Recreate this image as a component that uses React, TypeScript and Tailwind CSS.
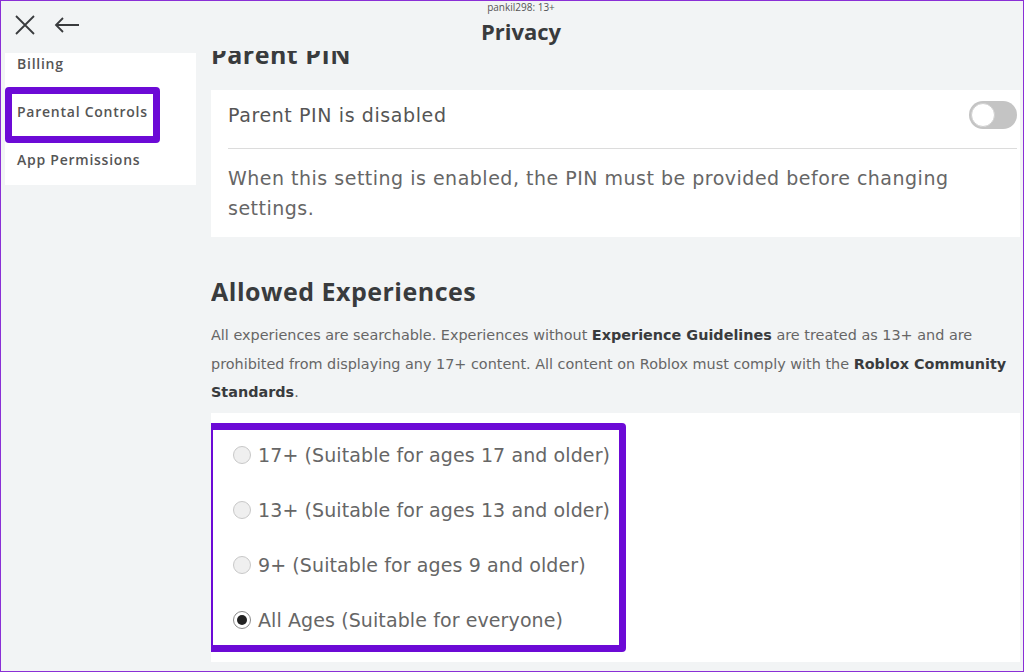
import React, { useState } from "react";

const radioOptions = [
  "17+ (Suitable for ages 17 and older)",
  "13+ (Suitable for ages 13 and older)",
  "9+ (Suitable for ages 9 and older)",
  "All Ages (Suitable for everyone)",
];

const sideItems = ["Billing", "Parental Controls", "App Permissions"];

const wide = { fontFamily: '"DejaVu Sans", "Open Sans", sans-serif' };

const App = () => {
  const [selected, setSelected] = useState(3);
  const [pinOn, setPinOn] = useState(false);

  return (
    <div
      className="w-[1024px] h-[672px] border border-[#8a2fd6] bg-[#f2f4f5] overflow-hidden flex flex-col text-[#393b3d]"
      style={{ fontFamily: '"Open Sans", "Noto Sans", sans-serif' }}
    >
      {/* Header */}
      <div className="relative h-[50px] shrink-0 flex items-start">
        <div className="flex items-center gap-[18px] pl-[13px] pt-[13px]">
          <svg width="22" height="22" viewBox="0 0 22 22" fill="none" stroke="#393b3d" strokeWidth="1.8">
            <path d="M2 2 L20 20 M20 2 L2 20" />
          </svg>
          <svg width="26" height="16" viewBox="0 0 26 16" fill="none" stroke="#393b3d" strokeWidth="1.8">
            <path d="M25 8 H2 M9 1 L2 8 L9 15" />
          </svg>
        </div>
        <div className="absolute left-[18px] right-0 top-0 flex flex-col items-center">
          <span className="text-[10px] leading-[14px] text-[#555] mt-[-1px]">pankil298: 13+</span>
          <span className="text-[22px] leading-[30px] font-bold mt-[2px]">Privacy</span>
        </div>
      </div>

      <div className="flex flex-1 min-h-0 pl-[4px]">
        {/* Sidebar */}
        <div className="relative w-[191px] h-[132px] shrink-0 mt-[2px] bg-white">
          <div className="overflow-hidden h-full">
            <div className="mt-[-14px]">
              {sideItems.map((item) => (
                <div
                  key={item}
                  className="h-[48px] flex items-center pl-[12px] text-[14px] tracking-[0.75px] font-semibold text-[#555]"
                >
                  {item}
                </div>
              ))}
            </div>
          </div>
          <div className="absolute left-[0px] top-[34px] w-[155px] h-[56px] border-[7px] border-[#6c0ad6] rounded-[4px]" />
        </div>

        {/* Main */}
        <div className="flex-1 min-w-0 ml-[15px] mr-[3px] overflow-hidden">
          <div className="mt-[-13px]">
            <h2 className="text-[25px] leading-[32px] tracking-[0.5px] font-bold">Parent PIN</h2>
            <div className="bg-white mt-[20px] pl-[17px] pr-[3px]" style={wide}>
              <div className="flex items-center justify-between pt-[11px] pb-[19px] border-b border-[#dcdcdc]">
                <span className="text-[19px] leading-[28px] tracking-[0.6px] text-[#555]">Parent PIN is disabled</span>
                <button
                  onClick={() => setPinOn(!pinOn)}
                  className={`w-[48px] h-[28px] rounded-full flex items-center p-[2px] ${
                    pinOn ? "bg-[#00b06f] justify-end" : "bg-[#c4c4c4] justify-start"
                  }`}
                >
                  <span className="w-[24px] h-[24px] rounded-full bg-white border border-[#d0d0d0]" />
                </button>
              </div>
              <p className="pt-[14px] pb-[14px] text-[19px] leading-[30px] tracking-[0.5px] text-[#666]">
                When this setting is enabled, the PIN must be provided before changing settings.
              </p>
            </div>

            <h2 className="text-[25px] leading-[32px] tracking-[0.5px] font-bold mt-[38px]">Allowed Experiences</h2>
            <p className="mt-[14px] mr-[-6px] text-[14.4px] leading-[28.5px] text-[#666]" style={wide}>
              All experiences are searchable. Experiences without{" "}
              <span className="font-semibold text-[#393b3d]">Experience Guidelines</span> are treated as 13+ and are
              prohibited from displaying any 17+ content. All content on Roblox must comply with the{" "}
              <span className="font-semibold text-[#393b3d]">Roblox Community Standards</span>.
            </p>

            <div className="relative bg-white mt-[6px] pt-[15px] pb-[14px] pl-[22px]" style={wide}>
              {radioOptions.map((opt, i) => (
                <label
                  key={opt}
                  onClick={() => setSelected(i)}
                  className="h-[55px] flex items-center gap-[7px] cursor-pointer text-[19px] tracking-[0.1px] text-[#666]"
                >
                  <span
                    className={`w-[18px] h-[18px] shrink-0 rounded-full flex items-center justify-center border ${
                      selected === i ? "border-[#8a8a8a] bg-white" : "border-[#c8c8c8] bg-[#efefef]"
                    }`}
                  >
                    {selected === i && <span className="w-[10px] h-[10px] rounded-full bg-[#222]" />}
                  </span>
                  {opt}
                </label>
              ))}
              <div className="absolute left-[-5px] top-[10px] w-[420px] h-[229px] border-[7px] border-[#6c0ad6] rounded-[4px] pointer-events-none" />
            </div>
          </div>
        </div>
      </div>
    </div>
  );
};

export default App;
